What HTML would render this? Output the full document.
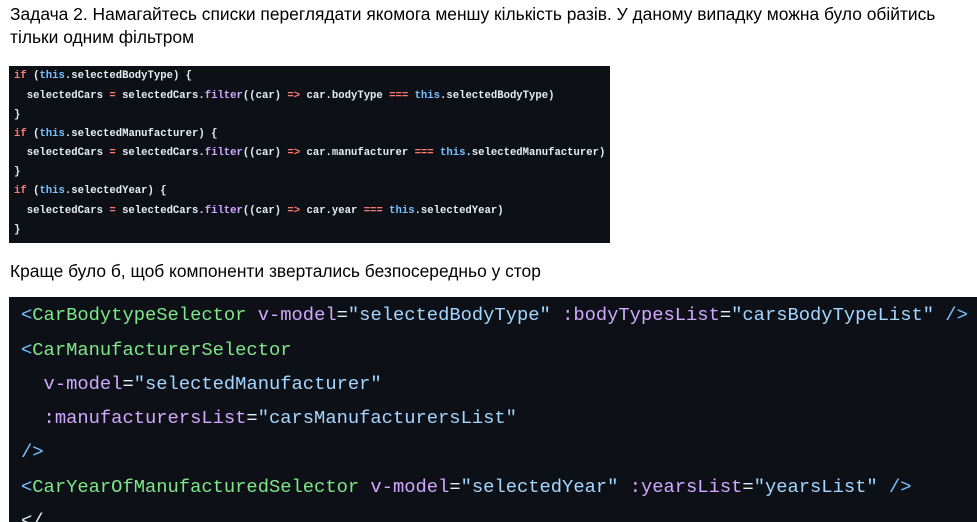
<!DOCTYPE html>
<html><head><meta charset="utf-8"><style>
html,body{margin:0;padding:0;background:#fff;width:977px;height:522px;overflow:hidden}
.t{position:absolute;left:10px;font-family:"Liberation Sans",sans-serif;font-size:17.4px;color:#000;white-space:nowrap}
.c1{position:absolute;left:9px;top:66px;width:601px;height:177px;background:#0d1117;overflow:hidden}
.c2{position:absolute;left:9px;top:297px;width:968px;height:225px;background:#0d1117;overflow:hidden}
.c1 div{position:absolute;left:5px;font-family:"Liberation Mono",monospace;font-size:10.6px;color:#e6edf3;white-space:pre;font-weight:bold}
.c2 div{position:absolute;left:12px;font-family:"Liberation Mono",monospace;font-size:18.8px;color:#e6edf3;white-space:pre}
.k{color:#ff7b72}.b{color:#79c0ff}.f{color:#d2a8ff}.g{color:#7ee787}.s{color:#a5d6ff}
</style></head><body>
<div class="t" style="top:4px">Задача 2. Намагайтесь списки переглядати якомога меншу кількість разів. У даному випадку можна було обійтись</div>
<div class="t" style="top:27px">тільки одним фільтром</div>
<div class="c1">
<div style="top:4px"><span class="k">if</span> (<span class="b">this</span>.selectedBodyType) {</div>
<div style="top:24px">  selectedCars <span class="k">=</span> selectedCars.<span class="f">filter</span>((car) <span class="k">=&gt;</span> car.bodyType <span class="k">===</span> <span class="b">this</span>.selectedBodyType)</div>
<div style="top:43px">}</div>
<div style="top:62px"><span class="k">if</span> (<span class="b">this</span>.selectedManufacturer) {</div>
<div style="top:81px">  selectedCars <span class="k">=</span> selectedCars.<span class="f">filter</span>((car) <span class="k">=&gt;</span> car.manufacturer <span class="k">===</span> <span class="b">this</span>.selectedManufacturer)</div>
<div style="top:100px">}</div>
<div style="top:119px"><span class="k">if</span> (<span class="b">this</span>.selectedYear) {</div>
<div style="top:139px">  selectedCars <span class="k">=</span> selectedCars.<span class="f">filter</span>((car) <span class="k">=&gt;</span> car.year <span class="k">===</span> <span class="b">this</span>.selectedYear)</div>
<div style="top:158px">}</div>
</div>
<div class="t" style="top:261px">Краще було б, щоб компоненти звертались безпосередньо у стор</div>
<div class="c2">
<div style="top:7px"><span class="b">&lt;</span><span class="g">CarBodytypeSelector</span> <span class="f">v-model</span>=<span class="s">"selectedBodyType"</span> <span class="f">:bodyTypesList</span>=<span class="s">"carsBodyTypeList"</span> <span class="b">/&gt;</span></div>
<div style="top:42px"><span class="b">&lt;</span><span class="g">CarManufacturerSelector</span></div>
<div style="top:76px">  <span class="f">v-model</span>=<span class="s">"selectedManufacturer"</span></div>
<div style="top:110px">  <span class="f">:manufacturersList</span>=<span class="s">"carsManufacturersList"</span></div>
<div style="top:144px"><span class="b">/&gt;</span></div>
<div style="top:179px"><span class="b">&lt;</span><span class="g">CarYearOfManufacturedSelector</span> <span class="f">v-model</span>=<span class="s">"selectedYear"</span> <span class="f">:yearsList</span>=<span class="s">"yearsList"</span> <span class="b">/&gt;</span></div>
<div style="top:213px">&lt;/</div>
</div>
</body></html>
